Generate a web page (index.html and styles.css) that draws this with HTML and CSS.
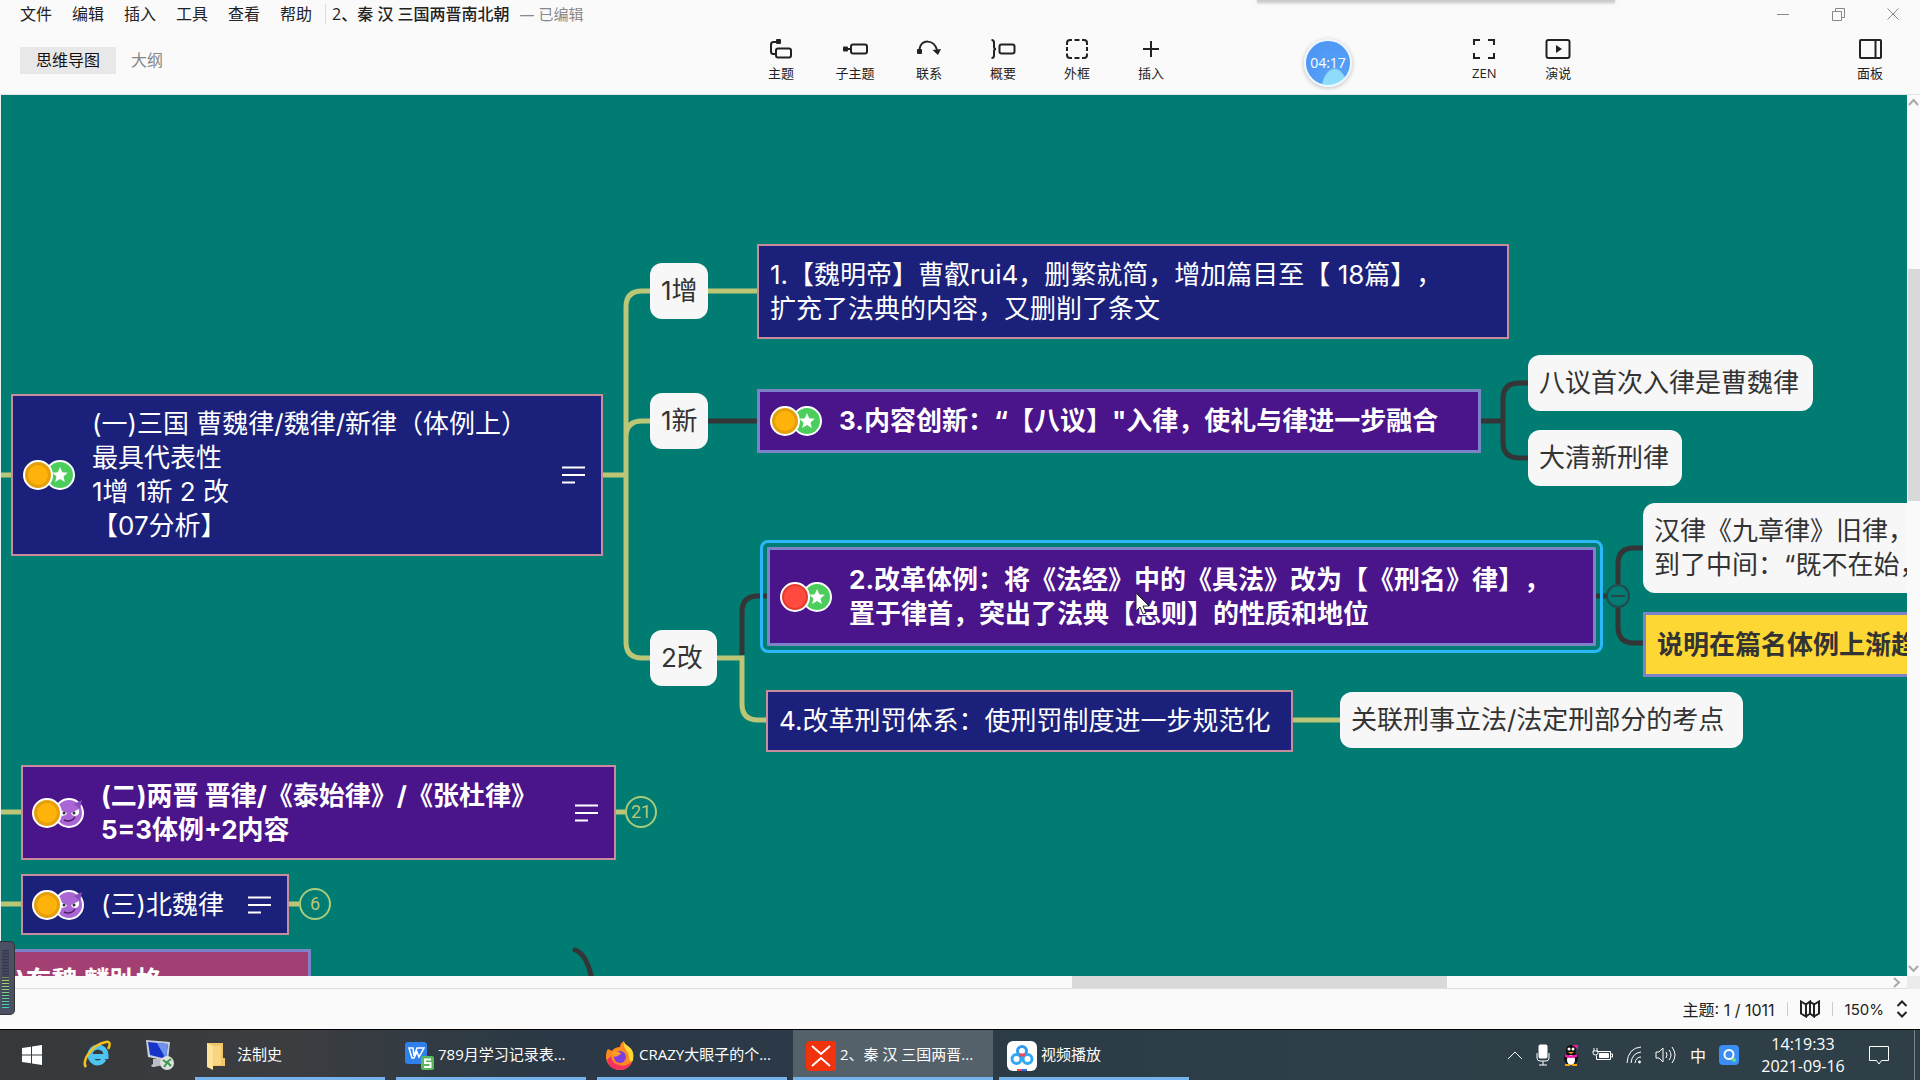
FILE: index.html
```html
<!DOCTYPE html>
<html lang="zh-CN">
<head>
<meta charset="utf-8">
<title>2、秦 汉 三国两晋南北朝</title>
<link rel="stylesheet" href="styles.css">
</head>
<body>
<svg class="defs" aria-hidden="true">
  <defs>
    <g id="coin"><circle cx="15" cy="15" r="14" fill="#e59f0b" stroke="#fff" stroke-width="2"/><circle cx="15" cy="15" r="10" fill="#ffb30a"/></g>
    <g id="red"><circle cx="15" cy="15" r="14" fill="#e43b30" stroke="#fff" stroke-width="2"/><circle cx="15" cy="15" r="11" fill="#ff4a40"/></g>
    <g id="star"><circle cx="37" cy="15" r="14" fill="#4cce5d" stroke="#fff" stroke-width="2"/><path d="M37 7l2.200 5.200 5.600.5-4.300 3.700 1.300 5.500-4.800-3-4.800 3 1.300-5.500-4.300-3.700 5.600-.5z" fill="#fff"/></g>
    <g id="imp"><circle cx="37" cy="15" r="14" fill="#ab66d6" stroke="#fff" stroke-width="2"/><path d="M50 2l-8 4 6 5z" fill="#8d4bc0"/><path d="M28 12l7 3c-1 3-5 4-7 1zM47 11l-8 4c1 4 7 4 8 0z" fill="#fff"/><circle cx="32" cy="15" r="1.500" fill="#333"/><circle cx="42" cy="15" r="1.500" fill="#333"/><path d="M32 22c4 2 9 1 11-3" fill="none" stroke="#4b2162" stroke-width="1.500"/></g>
    <g id="note"><path d="M0 1.500h23M0 9h23M0 16.500h13" fill="none" stroke="#fff" stroke-width="2"/></g>
  </defs>
</svg>

<header class="header">
  <div class="titlebar">
    <nav class="menu">
      <button>文件</button><button>编辑</button><button>插入</button><button>工具</button><button>查看</button><button>帮助</button>
    </nav>
    <h1 class="doc-title">2、秦 汉 三国两晋南北朝</h1>
    <span class="doc-state">— 已编辑</span>
    <div class="window-buttons">
      <button aria-label="最小化"><svg width="14" height="14" viewBox="0 0 14 14"><path d="M1 7.500h12"/></svg></button>
      <button aria-label="还原"><svg width="14" height="14" viewBox="0 0 14 14"><path d="M1.500 4.500h9v9h-9zM4.500 4.500v-3h9v9h-3"/></svg></button>
      <button aria-label="关闭"><svg width="14" height="14" viewBox="0 0 14 14"><path d="M1.500 1.500l11 11M12.500 1.500l-11 11"/></svg></button>
    </div>
  </div>
  <div class="toolbar">
    <div class="views">
      <button class="view view-active">思维导图</button><button class="view">大纲</button>
    </div>
    <div class="tools">
      <button class="tool"><svg width="26" height="22" viewBox="0 0 26 22"><rect x="8" y="10.500" width="15" height="9" rx="2"/><path d="M8 16H5.500Q3 16 3 13.500V6.500Q3 4 5.500 4H8"/><rect class="solid" x="8" y="1" width="5" height="5" rx="1"/></svg>主题</button>
      <button class="tool"><svg width="26" height="22" viewBox="0 0 26 22"><rect x="9" y="6.500" width="16" height="9" rx="2"/><path d="M4 11h5"/><rect class="solid" x="1" y="8.500" width="5" height="5" rx="1"/></svg>子主题</button>
      <button class="tool"><svg width="26" height="22" viewBox="0 0 26 22"><path d="M3.500 11C5 1 18 1 21 12"/><rect class="solid" x="1" y="11" width="5" height="5" rx="1"/><path class="solid" d="M16.500 12l8.500-1-3 6z"/></svg>联系</button>
      <button class="tool"><svg width="26" height="22" viewBox="0 0 26 22"><rect x="9.500" y="6.500" width="15" height="9" rx="2"/><path d="M1.500 2Q4 2 4 4.500V8.500Q4 11 6 11Q4 11 4 13.500V17.500Q4 20 1.500 20"/></svg>概要</button>
      <button class="tool"><svg width="26" height="22" viewBox="0 0 26 22"><path d="M3 7V5Q3 2 6 2H8M10.500 2h5M18 2h2Q23 2 23 5v2M23 9v4M23 15.500v1.500Q23 20 20 20h-2M15.500 20h-5M8 20H6Q3 20 3 17v-1.500M3 13V9"/></svg>外框</button>
      <button class="tool"><svg width="26" height="22" viewBox="0 0 26 22"><path d="M13 3v16M5 11h16"/></svg>插入</button>
    </div>
    <div class="tools tools-show">
      <button class="tool"><svg width="26" height="22" viewBox="0 0 26 22"><path d="M3 7V2h6M17 2h6v5M23 15v5h-6M9 20H3v-5"/></svg>ZEN</button>
      <button class="tool"><svg width="26" height="22" viewBox="0 0 26 22"><rect x="1.500" y="2" width="23" height="18" rx="2"/><path class="solid" d="M11 7l6 4-6 4z"/></svg>演说</button>
    </div>
    <div class="tools tools-panel">
      <button class="tool"><svg width="26" height="22" viewBox="0 0 26 22"><rect x="3" y="2" width="21" height="18" rx="1"/><path d="M18.500 2v18"/></svg>面板</button>
    </div>
  </div>
  <div class="drawer"></div>
  <div class="timer">04:17</div>
</header>

<main class="workspace">
  <div class="canvas">
    <svg class="links" width="1906" height="881" viewBox="1 95 1906 881">
      <g class="olive">
        <path d="M0 475H12M0 812H22M0 904H22M602 475H626M650 291H642Q626 291 626 307V642Q626 658 642 658H650M626 437Q626 421 642 421H650"/>
        <path d="M708 291H758M717 658H742V704Q742 720 758 720H767M1292 720H1341M616 812H625M289 904H299"/>
      </g>
      <g class="dark">
        <path d="M708 421H758M1480 421H1503M1529 383H1519Q1503 383 1503 399V442Q1503 458 1519 458H1529"/>
        <path d="M742 655V612Q742 596 758 596H767M1596 596H1607M1644 548H1634Q1618 548 1618 564V584M1618 608V627Q1618 643 1634 643H1644"/>
        <path d="M575 950Q587 954 592 980" stroke-linecap="round"/>
      </g>
    </svg>

    <div class="node navy n-wei">
      <svg class="marks" width="52" height="30"><use href="#star"/><use href="#coin"/></svg>
      <p>(一)三国 曹魏律/魏律/新律（体例上）<br>最具代表性<br>1增 1新 2 改<br>【07分析】</p>
      <svg class="note" width="23" height="18"><use href="#note"/></svg>
    </div>
    <div class="node plain n-zeng">1增</div>
    <div class="node plain n-xin">1新</div>
    <div class="node plain n-gai">2改</div>
    <div class="node navy n-ming"><p>1.【魏明帝】曹叡rui4，删繁就简，增加篇目至【 18篇】，<br>扩充了法典的内容，又删削了条文</p></div>
    <div class="node purple periwinkle n-bayi">
      <svg class="marks" width="52" height="30"><use href="#star"/><use href="#coin"/></svg>
      <p>3.内容创新：“【八议】"入律，使礼与律进一步融合</p>
    </div>
    <div class="node plain n-shouci">八议首次入律是曹魏律</div>
    <div class="node plain n-daqing">大清新刑律</div>
    <div class="node purple periwinkle selected n-tili">
      <svg class="marks" width="52" height="30"><use href="#star"/><use href="#red"/></svg>
      <p>2.改革体例：将《法经》中的《具法》改为【《刑名》律】，<br>置于律首，突出了法典【总则】的性质和地位</p>
    </div>
    <div class="node navy n-xingfa">4.改革刑罚体系：使刑罚制度进一步规范化</div>
    <div class="node plain n-guanlian">关联刑事立法/法定刑部分的考点</div>
    <div class="node plain n-hanlv"><p>汉律《九章律》旧律，<br>到了中间：“既不在始，</p></div>
    <div class="node yellow periwinkle n-shuoming">说明在篇名体例上渐趋</div>
    <div class="node purple n-jin">
      <svg class="marks" width="52" height="30"><use href="#imp"/><use href="#coin"/></svg>
      <p>(二)两晋 晋律/《泰始律》/《张杜律》<br>5=3体例+2内容</p>
      <svg class="note" width="23" height="18"><use href="#note"/></svg>
    </div>
    <div class="node navy n-beiwei">
      <svg class="marks" width="52" height="30"><use href="#imp"/><use href="#coin"/></svg>
      <p>(三)北魏律</p>
      <svg class="note" width="23" height="18"><use href="#note"/></svg>
    </div>
    <div class="node pink periwinkle n-dongwei">(四)东魏 麟趾格</div>
    <button class="fold fold-count f-jin">21</button>
    <button class="fold fold-count f-beiwei">6</button>
    <button class="fold fold-minus f-tili" aria-label="折叠"></button>
    <svg class="cursor" width="16" height="24" viewBox="0 0 16 24"><path d="M1 1v18l4-4 3 7 3-1-3-7h6z" fill="#fff" stroke="#222"/></svg>
  </div>
  <div class="vscroll">
    <svg width="11" height="8" viewBox="0 0 11 8"><path d="M1 7l4.500-5 4.500 5"/></svg>
    <div class="vthumb"></div>
    <svg width="11" height="8" viewBox="0 0 11 8"><path d="M1 1l4.500 5 4.500-5"/></svg>
  </div>
  <div class="hscroll">
    <div class="hthumb"></div>
    <svg width="8" height="11" viewBox="0 0 8 11"><path d="M1 1l5 4.500-5 4.500"/></svg>
  </div>
  <div class="corner"></div>
  <div class="meter"></div>
</main>

<footer class="status">
  <span>主题: 1 / 1011</span>
  <i class="rule"></i>
  <button aria-label="地图"><svg width="20" height="18" viewBox="0 0 20 18"><path d="M1 1.500l5 3v12l-5-3zM6 4.500l4-3v12l-4 3M10 1.500l4 3v12l-4-3M14 4.500l5-3v12l-5 3"/></svg></button>
  <i class="rule"></i>
  <button class="zoom">150%</button>
  <button aria-label="缩放"><svg width="12" height="18" viewBox="0 0 12 18"><path d="M1.500 6L6 1.500 10.500 6M1.500 12L6 16.500 10.500 12"/></svg></button>
</footer>

<div class="taskbar">
  <button class="launch launch-start" aria-label="开始"><svg width="20" height="20" viewBox="0 0 20 20"><path d="M0 3l9-1.300V9.500H0zM10 1.500L20 0v9.500H10zM0 10.500h9v7.800L0 17zM10 10.500h10V20l-10-1.500z" fill="#fff"/></svg></button>
  <button class="launch" aria-label="浏览器"><svg width="30" height="30" viewBox="0 0 30 30"><path d="M22 19c-1.500 3-4 4-6.500 4A8 8 0 0 1 8 15a8 8 0 0 1 16 0v1.500H8" fill="none" stroke="#4cc5f3" stroke-width="5"/><path d="M4 27C-1 22 9 5 24 2c5-1 4 4 2 7" fill="none" stroke="#f4c020" stroke-width="2.500"/></svg></button>
  <button class="launch" aria-label="远程"><svg width="30" height="30" viewBox="0 0 30 30"><path d="M8 19l8-1 2 7-9 2c-3 0-4-2-1-3z" fill="#b9bdc4"/><path d="M1 0l24 2-2 19L3 17z" fill="#c9ced8"/><path d="M3 2l20 2-2 15L5 15z" fill="#1535c8"/><path d="M12 3l11 1-2 15z" fill="#6f93ea"/><circle cx="22" cy="23" r="7" fill="#dcdfdc"/><path d="M18 20l4 3-3 4M26 19l-4 3 4 4" fill="none" stroke="#3d9a4c" stroke-width="2"/></svg></button>
  <button class="task"><svg width="30" height="30" viewBox="0 0 30 30"><path d="M4 2h16v15h2v8H8z" fill="#efc668"/><path d="M4 2l6 3v24l-6-3z" fill="#ffe39a"/><path d="M10 5h8v19h-8z" fill="#f8d67e"/></svg><span>法制史</span></button>
  <button class="task"><svg width="30" height="30" viewBox="0 0 30 30"><rect x="1" y="1" width="22" height="22" rx="3" fill="#2f80ed"/><path d="M5 7h4l1 8 3-8h7l-5 9-2-5-3 6H8z" fill="none" stroke="#fff" stroke-width="1.500"/><rect x="17" y="15" width="13" height="14" rx="2" fill="#57b85c"/><path d="M27 18.500h-6v3.500h5.500v4H20" fill="none" stroke="#fff" stroke-width="2"/></svg><span>789月学习记录表...</span></button>
  <button class="task"><svg width="30" height="30" viewBox="0 0 30 30"><path d="M3 8l4 2c2-3 5-4 8-4 0-3 2-5 4-6 0 3 3 4 5 6 4 3 5 7 4 12-1 6-6 11-13 11S2 24 1 17c0-4 0-6 2-9z" fill="#ff8a1f"/><path d="M19 0c0 3 3 4 5 6 4 3 5 8 4 13-2 3-4 1-4-3 0-6-7-8-5-16z" fill="#ffd83d"/><path d="M2 19c2 7 7 10 13 10 6 0 11-4 12-9-3 4-8 6-13 4-5-1-7-4-8-9z" fill="#f5315f"/><circle cx="15" cy="16" r="6" fill="#7a41e0"/><path d="M7 10c4-1 6 2 9 2-1 3-4 2-5 4-3-1-5-3-4-6z" fill="#ff9b28"/></svg><span>CRAZY大眼子的个...</span></button>
  <button class="task task-active"><svg width="30" height="30" viewBox="0 0 30 30"><rect width="30" height="30" rx="4" fill="#f0330d"/><path d="M6 5l9 8 9-8M6 25l9-8 9 8" fill="none" stroke="#fff" stroke-width="2"/></svg><span>2、秦 汉 三国两晋...</span></button>
  <button class="task"><svg width="30" height="30" viewBox="0 0 30 30"><rect width="30" height="30" rx="6" fill="#fff"/><g fill="none" stroke-width="3"><circle cx="15" cy="10" r="4.500" stroke="#2f9bf0"/><circle cx="9.500" cy="18" r="4.500" stroke="#32a7f2"/><circle cx="20.500" cy="18" r="4.500" stroke="#32a7f2"/><path d="M12 14h6" stroke="#f3455c"/></g><path d="M10 28h5v2h-5z" fill="#f3455c"/><path d="M15 28h5v2h-5z" fill="#2f6fe0"/></svg><span>视频播放</span></button>
  <div class="tray">
    <svg class="line" width="16" height="20" viewBox="0 0 16 20"><path d="M1 14l7-7 7 7"/></svg>
    <svg class="line" width="14" height="22" viewBox="0 0 14 22"><rect class="fill" x="3" y="1" width="8" height="13" rx="1"/><path d="M1 9v5q0 3 3 3h6q3 0 3-3V9M7 17v4M3 21h8"/></svg>
    <svg width="16" height="22" viewBox="0 0 16 22"><ellipse cx="8" cy="14" rx="7" ry="7" fill="#111"/><circle cx="8" cy="6" r="5" fill="#111"/><ellipse cx="8" cy="16" rx="4" ry="5" fill="#fff"/><circle cx="6" cy="5" r="1.500" fill="#fff"/><circle cx="10" cy="5" r="1.500" fill="#fff"/><path d="M2 10q6 3 12 0v3q-6 2-12 0zM9 1l6 0v4z" fill="#ee1ba7"/><path d="M5 8h6l-3 2zM2 20h5v2H2zM9 20h5v2H9z" fill="#f5a500"/></svg>
    <svg class="line" width="21" height="18" viewBox="0 0 21 18"><path d="M5 5.500h13.500v8H4.500v-4M19 8h1.500v3H19M2 2v3M5 2v3M1 5h5v2q0 2-2.500 2T1 7z"/><path class="fill" d="M7.500 7.500h9v4h-9z"/></svg>
    <svg class="line" width="16" height="20" viewBox="0 0 16 20"><path d="M1 18Q2 3 15 2M5 18Q6 8 15 7M9 18q1-6 6-6"/><circle class="fill" cx="13.500" cy="17" r="1"/></svg>
    <svg class="line" width="22" height="20" viewBox="0 0 22 20"><path d="M1 7h3l4-4v14l-4-4H1zM11 7q2 3 0 6M14 5q4 5 0 10M17 2q6 8 0 16"/></svg>
    <span class="ime">中</span>
    <svg width="20" height="20" viewBox="0 0 20 20"><rect width="20" height="20" rx="4" fill="#3b8ef5"/><circle cx="10" cy="9.500" r="4.500" fill="none" stroke="#fff" stroke-width="2"/><circle cx="15" cy="15" r="2" fill="#66e08b"/></svg>
  </div>
  <time class="clock">14:19:33<br>2021-09-16</time>
  <button class="notify" aria-label="通知"><svg width="20" height="20" viewBox="0 0 20 20"><path d="M.500 1.500h19v14h-7L10 19l-2.500-3.500H.500z" fill="none" stroke="#fff"/></svg></button>
  <i class="peek"></i>
</div>
</body>
</html>
```
FILE: styles.css
```css
* { box-sizing: border-box; }

body {
  margin: 0;
  min-height: 100vh;
  display: flex;
  flex-direction: column;
  background: #fafafa;
  color: #222;
  font-family: "Open Sans", "Noto Sans CJK SC", sans-serif;
  font-size: 16px;
  overflow-x: hidden;
  text-spacing-trim: space-all;
}

button {
  border: 0;
  padding: 0;
  margin: 0;
  background: none;
  color: inherit;
  font: inherit;
  white-space: nowrap;
}

p { margin: 0; }
svg { display: block; flex: none; }
.defs { position: absolute; width: 0; height: 0; }

/* header */
.header {
  position: relative;
  height: 95px;
  border-bottom: 1px solid #e0e4e4;
}
.titlebar {
  display: flex;
  align-items: center;
  height: 28px;
  padding-left: 20px;
  line-height: 24px;
}
.menu {
  display: flex;
  gap: 20px;
  padding-right: 13px;
  border-right: 1px solid #ddd;
  line-height: 20px;
}
.doc-title {
  margin: 0 10px 0 6px;
  font-size: 16px;
  font-weight: 500;
}
.doc-state { color: #888; font-size: 15px; }
.window-buttons { display: flex; margin-left: auto; }
.window-buttons button {
  width: 55px;
  display: flex;
  justify-content: center;
}
.window-buttons svg { fill: none; stroke: #888; }

.toolbar { display: flex; height: 66px; }
.views {
  flex: 748 1 0;
  display: flex;
  align-items: center;
  gap: 15px;
  padding: 0 0 2px 20px;
}
.view { height: 27px; color: #888; line-height: 24px; }
.view-active { padding: 0 16px; background: #e8e8e8; color: #111; }
.tools { display: flex; }
.tools-show { margin-left: 13.5%; }
.tools-panel { flex: 322 1 0; justify-content: flex-end; padding-right: 13px; }
.tool {
  width: 74px;
  padding-top: 10px;
  display: flex;
  flex-direction: column;
  align-items: center;
  gap: 3px;
  font-size: 13px;
  line-height: 20px;
}
.tool svg { fill: none; stroke: #222; stroke-width: 2; }
.tool .solid { fill: #222; stroke: none; }

.drawer {
  position: absolute;
  top: 0;
  left: 1257px;
  width: 358px;
  height: 2px;
  background: #ccc;
  box-shadow: 0 1px 3px #bbb;
}
.timer {
  position: absolute;
  top: 39px;
  left: 1304px;
  width: 48px;
  height: 48px;
  border: 2px solid #eef6ff;
  border-radius: 50%;
  background: radial-gradient(ellipse at 65% 120%, #8ddcfb 32%, #55a0f5 35%, #4a93f5);
  box-shadow: 0 1px 4px #bbb;
  color: #fff;
  font-size: 14px;
  line-height: 44px;
  text-align: center;
}

/* workspace */
.workspace {
  flex: 1;
  position: relative;
  display: grid;
  grid-template-columns: minmax(0, 1fr) 13px;
  grid-template-rows: minmax(0, 1fr) 13px;
}
.canvas {
  position: relative;
  min-height: 400px;
  overflow: hidden;
  border-left: 1px solid #e8f2f1;
  background: #007c73;
}
.vscroll {
  display: flex;
  flex-direction: column;
  align-items: center;
  padding: 3px 0;
}
.vscroll svg, .hscroll svg { fill: none; stroke: #aaa; stroke-width: 2; }
.vthumb { width: 12px; flex: 0 0 26.5%; margin: 163px 0 auto; background: #d9d9d9; }
.hscroll {
  display: flex;
  align-items: center;
  border-bottom: 1px solid #ddd;
  padding-right: 6px;
}
.hthumb { width: 19.7%; height: 12px; margin-left: 56.4%; margin-right: auto; background: #d9d9d9; }
.corner { background: #ebebeb; }
.meter {
  position: absolute;
  left: 0;
  bottom: -26px;
  width: 15px;
  height: 74px;
  border: 1px solid #333;
  border-left: 0;
  border-radius: 0 5px 5px 0;
  background:
    repeating-linear-gradient(#0000 0 1px, #414757 1px 3px) 2px 8px / 7px 58px no-repeat,
    linear-gradient(#3a3550 45%, #b5d35c 50%, #3fd0c0) 2px 8px / 7px 58px no-repeat,
    #4b5064;
  z-index: 2;
}

/* mind map */
.links { position: absolute; top: 0; left: 0; fill: none; stroke-width: 5; }
.olive { stroke: #bbc676; }
.dark { stroke: #333536; }

.node {
  position: absolute;
  display: flex;
  align-items: center;
  padding: 0 11px;
  border: 2px solid #c98c9c;
  color: #fff;
  font-family: Inter, "Noto Sans CJK SC", sans-serif;
  font-size: 26px;
  line-height: 34px;
  white-space: nowrap;
}
.navy { background: #1b217b; }
.purple { background: #4a148a; font-weight: 700; }
.pink { background: #a33f73; font-weight: 700; }
.yellow { background: #fdd835; color: #333; font-weight: 700; }
.periwinkle { border: 3px solid #7c83c9; }
.plain { border: 0; border-radius: 12px; background: #f7f7f7; color: #333; height: 56px; }
.selected { outline: 3px solid #2bb8f8; outline-offset: 4px; border-radius: 1px; }
.marks { margin-right: 17px; }
.note { margin-left: auto; }

.n-wei { left: 10px; top: 299px; width: 592px; height: 162px; padding: 0 16px 0 10px; }
.n-zeng { left: 649px; top: 168px; width: 58px; }
.n-xin { left: 649px; top: 298px; width: 58px; }
.n-gai { left: 649px; top: 535px; width: 67px; }
.n-ming { left: 756px; top: 149px; width: 752px; height: 95px; }
.n-bayi { left: 756px; top: 294px; width: 724px; height: 64px; padding: 0 10px; }
.n-shouci { left: 1527px; top: 260px; width: 285px; }
.n-daqing { left: 1527px; top: 335px; width: 154px; }
.n-tili { left: 766px; top: 452px; width: 829px; height: 99px; padding: 0 10px; }
.n-xingfa { left: 765px; top: 595px; width: 527px; height: 62px; }
.n-guanlian { left: 1339px; top: 597px; width: 403px; }
.n-hanlv { left: 1642px; top: 408px; width: 400px; height: 90px; }
.n-shuoming { left: 1642px; top: 517px; width: 400px; height: 65px; }
.n-jin { left: 20px; top: 670px; width: 595px; height: 95px; padding: 0 16px 0 9px; }
.n-beiwei { left: 20px; top: 779px; width: 268px; height: 61px; padding: 0 16px 0 9px; }
.n-dongwei { left: -40px; top: 854px; width: 350px; height: 64px; padding: 0 16px; }

.fold {
  position: absolute;
  border-radius: 50%;
  background: #007c73;
}
.fold-count { width: 32px; height: 32px; border: 2px solid #a9cb7b; color: #bbc676; font: 18px/28px Roboto, sans-serif; }
.f-jin { left: 624px; top: 701px; }
.f-beiwei { left: 298px; top: 793px; }
.fold-minus {
  width: 24px;
  height: 24px;
  border: 2px solid #26484a;
  background: linear-gradient(#26484a, #26484a) center / 14px 2px no-repeat #007c73;
}
.f-tili { left: 1605px; top: 489px; }
.cursor { position: absolute; left: 1134px; top: 497px; }

/* status bar */
.status {
  display: flex;
  align-items: center;
  justify-content: flex-end;
  gap: 12px;
  height: 40px;
  padding-right: 12px;
  font-family: Inter, "Noto Sans CJK SC", sans-serif;
  font-size: 16px;
}
.zoom { font-size: 15px; }
.status svg { fill: none; stroke: #222; stroke-width: 2; }
.rule { width: 1px; height: 14px; background: #ccc; }

/* taskbar */
.taskbar {
  display: flex;
  align-items: stretch;
  height: 51px;
  border-top: 1px solid #000;
  background: linear-gradient(90deg, #35393b, #3c3d40 15%, #2a3945 28%, #2b3a46 42%, #2d3f48 70%, #2f3f48);
  color: #fff;
  font-size: 15px;
}
.launch { width: 63px; display: flex; justify-content: center; align-items: center; }
.launch-start { margin-right: 2px; }
.launch + .task { margin-left: 4px; }
.task {
  display: flex;
  align-items: center;
  gap: 4px;
  flex: 0 1 190px;
  padding: 0 8px;
  margin-right: 11px;
  border-bottom: 3px solid #76b2ec;
}
.task svg { margin-top: 4px; }
.task-active { flex-basis: 200px; margin: 0 6px 0 -5px; padding-left: 13px; background: #55616a; }
.tray {
  display: flex;
  align-items: center;
  gap: 13px;
  margin-left: auto;
}
.tray .line { fill: none; stroke: #fff; }
.tray .fill { fill: #fff; }
.ime { font-size: 16px; }
.clock {
  width: 128px;
  padding-top: 3px;
  font-size: 16px;
  line-height: 22px;
  text-align: center;
}
.notify { width: 20px; margin: 0 25px 0 2px; display: flex; align-items: center; }
.peek { width: 6px; border-left: 1px solid #7b868c; }
```
